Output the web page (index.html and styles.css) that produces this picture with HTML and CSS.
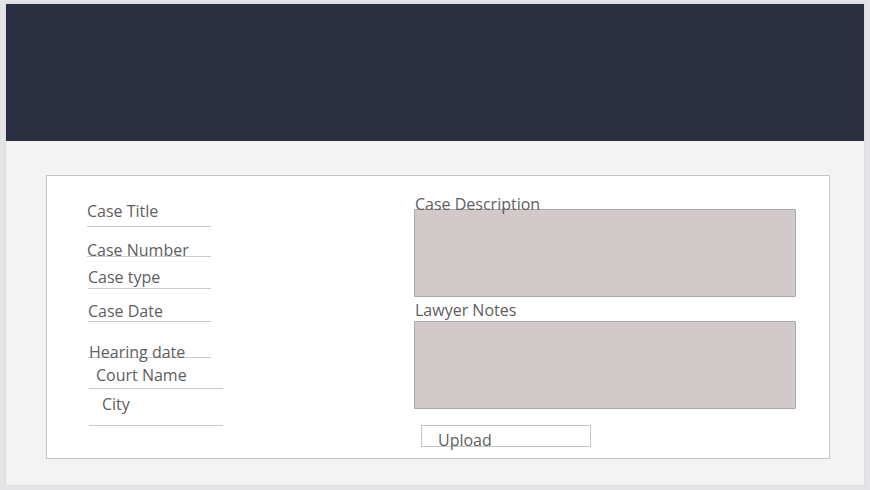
FILE: index.html
```html
<!DOCTYPE html>
<html lang="en">
<head>
<meta charset="utf-8">
<title>Case Form</title>
<link rel="stylesheet" href="styles.css">
</head>
<body>
<div class="frame">
  <header class="header"></header>
  <main class="content">
    <section class="card">
      <div class="col-left">
        <div class="field f-title"><span class="label">Case Title</span></div>
        <div class="field f-number"><span class="label">Case Number</span></div>
        <div class="field f-type"><span class="label">Case type</span></div>
        <div class="field f-date"><span class="label">Case Date</span></div>
        <div class="field f-hearing"><span class="label">Hearing date</span></div>
        <div class="field f-court"><span class="label">Court Name</span></div>
        <div class="field f-city"><span class="label">City</span></div>
      </div>
      <div class="col-right">
        <div class="label area-label">Case Description</div>
        <div class="area area-desc"></div>
        <div class="label area-label notes-label">Lawyer Notes</div>
        <div class="area area-notes"></div>
        <div class="upload"><span class="label">Upload</span></div>
      </div>
    </section>
  </main>
</div>
</body>
</html>
```
FILE: styles.css
```css
* { box-sizing: border-box; }
html, body { margin: 0; padding: 0; }
body {
  background: #e4e4e6;
  width: 870px;
  height: 490px;
  overflow: hidden;
  font-family: "Open Sans", "Noto Sans", sans-serif;
  color: #5e5e5e;
}
.frame {
  margin: 3px 5px 0 5px;
  width: 860px;
  height: 483px;
  background: #f3f3f3;
  border: 1px solid #dcdde2;
}
.header {
  height: 137px;
  background: #292e41;
}
.content {
  padding: 34px 0 0 40px;
}
.card {
  width: 784px;
  height: 284px;
  background: #ffffff;
  border: 1px solid #c6c6c6;
  display: grid;
  grid-template-columns: 367px 1fr;
}
.label {
  font-size: 16px;
  line-height: 20px;
  display: block;
  white-space: nowrap;
  padding-top: 1px;
}
.col-left {
  padding: 24px 0 0 40px;
}
.field {
  border-bottom: 1px solid #c9c9c9;
  width: 124px;
}
.f-title   { height: 27px; }
.f-number  { height: 18px; margin-top: 12px; }
.f-type    { height: 23px; margin-top: 9px; margin-left: 1px; width: 123px; }
.f-date    { height: 22px; margin-top: 11px; margin-left: 1px; width: 123px; }
.f-hearing { height: 17px; margin-top: 19px; margin-left: 1px; width: 123px; }
.f-hearing .label { padding-left: 1px; }
.f-court   { height: 25px; margin-top: 6px; margin-left: 2px; width: 134px; }
.f-court .label { padding-left: 7px; }
.f-city    { height: 33px; margin-top: 4px; margin-left: 2px; width: 134px; }
.f-city .label { padding-left: 13px; }

.col-right {
  padding-top: 17px;
}
.area-label { padding-left: 1px; }
.area {
  width: 382px;
  height: 88px;
  background: #d2caca;
  border: 1px solid #aaa8a8;
  border-radius: 1px;
}
.area-desc { margin-top: -5px; }
.notes-label { margin-top: 2px; }
.area-notes { margin-top: 1px; }
.upload {
  margin: 16px 0 0 7px;
  width: 170px;
  height: 22px;
  border: 1px solid #c2c2c2;
  padding: 3px 0 0 16px;
}
```
